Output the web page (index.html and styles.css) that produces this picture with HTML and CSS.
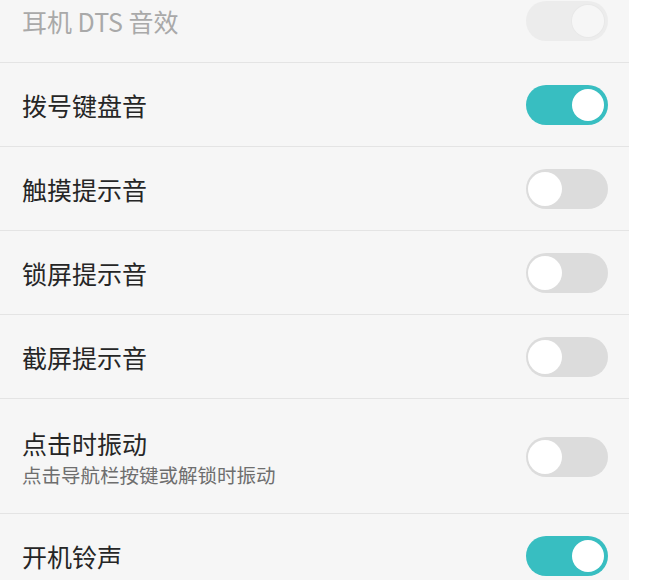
FILE: index.html
```html
<!DOCTYPE html>
<html lang="zh-CN">
<head>
    <meta charset="UTF-8">
    <meta name="viewport" content="width=device-width, initial-scale=1.0">
    <title>声音设置</title>
    <link rel="stylesheet" href="styles.css">
</head>
<body>
    <div class="panel">
        <div class="row first disabled">
            <div class="label"><span class="title">耳机 DTS 音效</span></div>
            <span class="switch on"></span>
        </div>
        <div class="row">
            <div class="label"><span class="title">拨号键盘音</span></div>
            <span class="switch on"></span>
        </div>
        <div class="row">
            <div class="label"><span class="title">触摸提示音</span></div>
            <span class="switch"></span>
        </div>
        <div class="row">
            <div class="label"><span class="title">锁屏提示音</span></div>
            <span class="switch"></span>
        </div>
        <div class="row">
            <div class="label"><span class="title">截屏提示音</span></div>
            <span class="switch"></span>
        </div>
        <div class="row tall">
            <div class="label">
                <span class="title">点击时振动</span>
                <span class="sub">点击导航栏按键或解锁时振动</span>
            </div>
            <span class="switch"></span>
        </div>
        <div class="row">
            <div class="label"><span class="title">开机铃声</span></div>
            <span class="switch on"></span>
        </div>
    </div>
</body>
</html>
```

FILE: styles.css
```css
* {
    margin: 0;
    padding: 0;
    box-sizing: border-box;
}

html, body {
    background: #ffffff;
    overflow: hidden;
}

body {
    font-family: "Noto Sans CJK SC", "Noto Sans", sans-serif;
    color: #333;
    height: 580px;
}

.panel {
    width: 629px;
    background: #f6f6f6;
    margin-top: -21px;
}

.row {
    display: flex;
    align-items: center;
    justify-content: space-between;
    height: 84px;
    padding: 0 21px 0 22px;
    border-bottom: 1px solid #e4e4e4;
}

.row.tall {
    height: 115px;
    padding-top: 2px;
}

.label {
    display: flex;
    flex-direction: column;
}

.title {
    font-size: 25px;
    line-height: 32px;
    color: #262626;
}

.sub {
    font-size: 19.5px;
    line-height: 26px;
    color: #6e6e6e;
    margin-top: 3px;
}

.disabled .title {
    color: #a9a9a9;
}

.switch {
    position: relative;
    width: 82px;
    height: 40px;
    border-radius: 20px;
    background: #dcdcdc;
    flex-shrink: 0;
}

.switch::after {
    content: "";
    position: absolute;
    top: 3px;
    left: 2px;
    width: 34px;
    height: 34px;
    border-radius: 50%;
    background: #fff;
}

.switch.on {
    background: #38bec1;
}

.switch.on::after {
    left: auto;
    right: 4px;
    top: 4px;
    width: 32px;
    height: 32px;
}

.disabled .switch {
    background: #ececec;
}

.disabled .switch::after {
    background: #f6f6f6;
    box-shadow: 0 0 0 1px #e8e8e8;
}
```
